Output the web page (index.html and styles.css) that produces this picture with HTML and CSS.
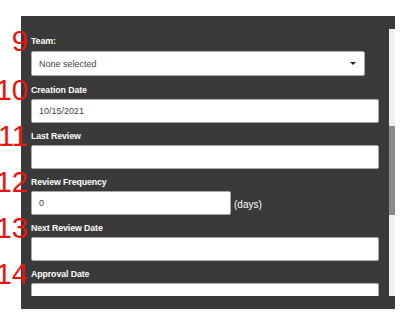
FILE: index.html
```html
<!DOCTYPE html>
<html>
<head>
<meta charset="utf-8">
<link rel="stylesheet" href="styles.css">
</head>
<body>
<div class="panel">
  <div class="form">
    <div class="field">
      <span class="num">9</span>
      <div class="label">Team:</div>
      <div class="select"><span class="value">None selected</span><span class="caret"></span></div>
    </div>
    <div class="field">
      <span class="num">10</span>
      <div class="label">Creation Date</div>
      <div class="input"><span class="value">10/15/2021</span></div>
    </div>
    <div class="field">
      <span class="num">11</span>
      <div class="label">Last Review</div>
      <div class="input"></div>
    </div>
    <div class="field">
      <span class="num">12</span>
      <div class="label">Review Frequency</div>
      <div class="row">
        <div class="input short"><span class="value">0</span></div>
        <span class="unit">(days)</span>
      </div>
    </div>
    <div class="field">
      <span class="num">13</span>
      <div class="label">Next Review Date</div>
      <div class="input"></div>
    </div>
    <div class="field">
      <span class="num">14</span>
      <div class="label">Approval Date</div>
      <div class="input"></div>
    </div>
  </div>
  <div class="track"><div class="thumb"></div></div>
</div>
</body>
</html>
```
FILE: styles.css
```css
html, body {
  margin: 0;
  padding: 0;
  background: #ffffff;
}
body {
  font-family: "Liberation Sans", Arial, sans-serif;
}
.panel {
  margin: 16px 0 0 21px;
  width: 374px;
  height: 293px;
  box-sizing: border-box;
  padding: 13px 0;
  background: #3a3a3a;
  display: flex;
  align-items: stretch;
}
.form {
  flex: 1;
  padding: 6px 10px 0 10px;
  overflow-x: visible;
  overflow-y: clip;
}
.track {
  width: 6px;
  background: #f0f0ef;
}
.thumb {
  margin-top: 97px;
  height: 89px;
  background: #8a8a8a;
}
.field {
  position: relative;
  margin-bottom: 7px;
}
.num {
  position: absolute;
  right: calc(100% + 3px);
  top: -9px;
  font-size: 29px;
  line-height: 30px;
  color: #e8140f;
  white-space: nowrap;
}
.label {
  font-size: 8.8px;
  font-weight: bold;
  letter-spacing: -0.1px;
  line-height: 12px;
  height: 12px;
  color: #ffffff;
  margin-bottom: 3px;
}
.input, .select {
  box-sizing: border-box;
  height: 24px;
  background: #ffffff;
  border: 1px solid #a9a9a9;
  border-radius: 2px;
  display: flex;
  align-items: center;
  padding-left: 7px;
}
.select {
  width: 334px;
  height: 25px;
  margin-top: 4px;
  margin-bottom: 8px;
  justify-content: space-between;
  padding-right: 8px;
}
.short {
  width: 200px;
}
.value {
  font-size: 9px;
  color: #444444;
}
.caret {
  width: 0;
  height: 0;
  border-left: 3px solid transparent;
  border-right: 3px solid transparent;
  border-top: 3px solid #222222;
}
.row {
  display: flex;
  align-items: center;
  gap: 3px;
}
.unit {
  font-size: 10px;
  color: #ffffff;
  margin-top: 2px;
}
```
